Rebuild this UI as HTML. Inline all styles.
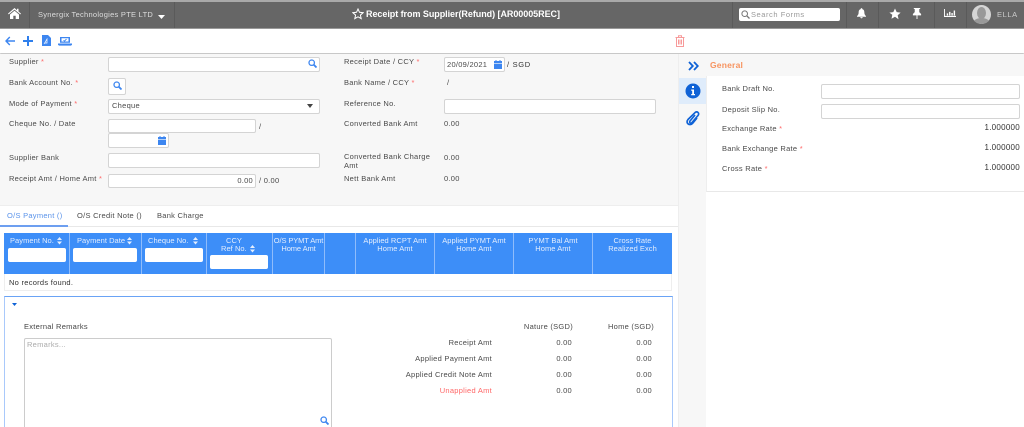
<!DOCTYPE html>
<html><head><meta charset="utf-8">
<style>
html,body{margin:0;padding:0;width:1024px;height:427px;overflow:hidden;background:#fff}
body{position:relative;font-family:"Liberation Sans",sans-serif;font-size:7.5px;letter-spacing:.27px;color:#4a4a4a}
.a,.t,.i,svg{position:absolute}
.t{line-height:10px;white-space:nowrap;margin-top:2px}
.r{text-align:right}
.c{text-align:center}
.i{box-sizing:border-box;background:#fff;border:1px solid #d4d4d4;border-radius:2px}
.s{color:#f66}
.d{width:1px;background:#8fbcfb;top:233px;height:41px}
.h{color:#e4eefe;line-height:8px;text-align:center;white-space:nowrap;top:237px;letter-spacing:.05px}
.f{background:#fff;border-radius:2px;height:14px;box-sizing:border-box}
.v{width:1px;background:#5a5a5a;top:2px;height:26px}
</style></head><body>
<!-- top bar -->
<div class="a" style="left:0;top:0;width:1024px;height:2px;background:#a9a9a9"></div>
<div class="a" style="left:0;top:2px;width:1024px;height:26px;background:#666"></div>
<div class="a" style="left:0;top:28px;width:1024px;height:1px;background:#999"></div>
<div class="a v" style="left:29px"></div><div class="a v" style="left:174px"></div>
<div class="a v" style="left:732px"></div><div class="a v" style="left:846px"></div>
<div class="a v" style="left:878px"></div><div class="a v" style="left:934px"></div>
<div class="a v" style="left:966px"></div>
<svg style="left:8px;top:8px" width="13" height="11" viewBox="0 0 13 11"><path fill="#fff" d="M6.5 0L0 5.6l.7.8L6.5 1.6l5.800 4.800.7-.8L10.500 3.500V.7H9v1.500zM2 6.500V11h3.300V7.700h2.400V11H11V6.500L6.500 2.800z"/></svg>
<div class="t" style="left:38px;top:8px;color:#ddd">Synergix Technologies PTE LTD</div>
<svg style="left:158px;top:15px" width="7" height="4" viewBox="0 0 7 4"><path fill="#fff" d="M0 0h7L3.500 4z"/></svg>
<svg style="left:352px;top:8px" width="12" height="12" viewBox="0 0 12 12"><path fill="none" stroke="#fff" stroke-width="1" d="M6 1l1.500 3.300 3.600.4-2.700 2.400.8 3.500L6 8.800l-3.200 1.800.8-3.500L.9 4.700l3.600-.4z"/></svg>
<div class="t" style="left:366px;top:7px;color:#fff;font-size:9px;letter-spacing:-.05px;font-weight:bold">Receipt from Supplier(Refund) [AR00005REC]</div>
<div class="a" style="left:739px;top:8px;width:101px;height:13px;background:#fff;border-radius:2px"></div>
<svg style="left:741px;top:10px" width="9" height="9" viewBox="0 0 9 9"><circle cx="3.700" cy="3.700" r="2.800" fill="none" stroke="#777" stroke-width="1"/><path stroke="#777" stroke-width="1.300" d="M5.800 5.800L8.500 8.500"/></svg>
<div class="t" style="left:751px;top:8px;color:#999;letter-spacing:.55px">Search Forms</div>
<svg style="left:857px;top:8px" width="9" height="11" viewBox="0 0 11 13"><path fill="#fff" d="M5.500 0a1 1 0 0 1 1 1.200C8.500 1.700 9 3.500 9 5.500c0 2 .8 3 2 4.200v.8H0v-.8c1.200-1.200 2-2.200 2-4.200 0-2 .5-3.800 2.500-4.300A1 1 0 0 1 5.500 0zM4 11h3a1.500 1.500 0 0 1-3 0z"/></svg>
<svg style="left:889px;top:8px" width="12" height="12" viewBox="0 0 12 12"><path fill="#fff" d="M6 .5l1.700 3.600 3.900.5-2.900 2.700.8 3.900L6 8.800l-3.500 1.900.8-3.900L.4 4.600l3.900-.5z"/></svg>
<svg style="left:912px;top:8px" width="10" height="11" viewBox="0 0 11 12"><path fill="#fff" d="M2 0h7v1H8v3.500l2 2V8H6v4H5V8H1V6.500l2-2V1H2z"/></svg>
<svg style="left:944px;top:9px" width="12" height="8" viewBox="0 0 13 11" preserveAspectRatio="none"><path fill="#fff" d="M0 0h1v9.500h12V11H0zM3 6h1.500v3H3zM5.500 4H7v5H5.500zM8 5.500h1.500V9H8zM10.500 2H12v7h-1.500z"/></svg>
<div class="a" style="left:972px;top:5px;width:19px;height:19px;border-radius:50%;background:#d5d5d5;overflow:hidden">
<div class="a" style="left:5px;top:2px;width:9px;height:12px;border-radius:50%;background:#999"></div>
<div class="a" style="left:1px;top:13px;width:17px;height:10px;border-radius:50%;background:#999"></div></div>
<div class="t" style="left:997px;top:8px;color:#ccc;letter-spacing:.6px">ELLA</div>
<!-- toolbar -->
<div class="a" style="left:0;top:29px;width:1024px;height:24px;background:#fff;box-shadow:0 1px 1px #bbb"></div>
<svg style="left:5px;top:36px" width="10" height="10" viewBox="0 0 10 10"><path fill="none" stroke="#3d86f0" stroke-width="1.400" d="M10 5H1M4.800 1L1 5l3.800 4"/></svg>
<svg style="left:23px;top:36px" width="10" height="10" viewBox="0 0 10 10"><path fill="#2f7fec" d="M4 0h2v4h4v2H6v4H4V6H0V4h4z"/></svg>
<svg style="left:42px;top:35px" width="9" height="11" viewBox="0 0 9 11"><path fill="#3d86f0" d="M0 0h6l3 3v8H0z"/><path fill="none" stroke="#fff" stroke-width=".7" d="M2 9l3-5v4H2.500"/></svg>
<svg style="left:58px;top:37px" width="14" height="9" viewBox="0 0 14 11" preserveAspectRatio="none"><path fill="#3d86f0" d="M2 0h10v7H2zM0 8h14v1.500l-1 1H1l-1-1z"/><path fill="#fff" d="M3.500 1.500h7v4h-7z"/><path fill="none" stroke="#3d86f0" d="M5.500 4l1 1 2-2.500"/></svg>
<svg style="left:675px;top:35px" width="10" height="12" viewBox="0 0 10 12"><path fill="none" stroke="#f79a9a" stroke-width="1" d="M.5 2.500h9M3.500 2.500V.7h3v1.800M1.500 2.500v9h7v-9M3.500 4.500v5M5 4.500v5M6.500 4.500v5"/></svg>
<!-- form bg -->
<div class="a" style="left:0;top:54px;width:679px;height:151px;background:#f7f7f7"></div>
<div class="a" style="left:679px;top:54px;width:27px;height:373px;background:#f7f7f7"></div>
<div class="a" style="left:706px;top:54px;width:318px;height:22px;background:#f7f7f7"></div>
<div class="a" style="left:706px;top:76px;width:318px;height:116px;background:#fff;border-left:1px solid #eee;border-bottom:1px solid #e8e8e8;box-sizing:border-box"></div>
<div class="a" style="left:678px;top:54px;width:1px;height:373px;background:#eee"></div>
<div class="a" style="left:679px;top:78px;width:27px;height:26px;background:#dfecfb"></div>
<!-- left form labels -->
<div class="t" style="left:9px;top:55px">Supplier <span class="s">*</span></div>
<div class="t" style="left:9px;top:76px">Bank Account No. <span class="s">*</span></div>
<div class="t" style="left:9px;top:97px">Mode of Payment <span class="s">*</span></div>
<div class="t" style="left:9px;top:117px">Cheque No. / Date</div>
<div class="t" style="left:9px;top:151px">Supplier Bank</div>
<div class="t" style="left:9px;top:172px">Receipt Amt / Home Amt <span class="s">*</span></div>
<div class="i" style="left:108px;top:57px;width:212px;height:15px"></div>
<svg style="left:308px;top:59px" width="9" height="9" viewBox="0 0 9 9"><circle cx="3.700" cy="3.700" r="2.700" fill="none" stroke="#3d86f0" stroke-width="1.300"/><path stroke="#3d86f0" stroke-width="1.800" d="M5.800 5.800L8.500 8.500"/></svg>
<div class="i" style="left:108px;top:78px;width:18px;height:17px"></div>
<svg style="left:113px;top:81px" width="9" height="9" viewBox="0 0 9 9"><circle cx="3.700" cy="3.700" r="2.700" fill="none" stroke="#3d86f0" stroke-width="1.300"/><path stroke="#3d86f0" stroke-width="1.800" d="M5.800 5.800L8.500 8.500"/></svg>
<div class="i" style="left:108px;top:99px;width:212px;height:15px"></div>
<div class="t" style="left:112px;top:99px">Cheque</div>
<svg style="left:307px;top:104px" width="6" height="4" viewBox="0 0 6 4"><path fill="#444" d="M0 0h6L3 4z"/></svg>
<div class="i" style="left:108px;top:119px;width:148px;height:14px"></div>
<div class="t" style="left:259px;top:120px">/</div>
<div class="i" style="left:108px;top:133px;width:61px;height:15px"></div>
<svg style="left:158px;top:136px" width="8" height="9" viewBox="0 0 8 9"><path fill="#3d86f0" d="M0 1h1.500V0h1v1h3V0h1v1H8v2H0zM0 3.600h8V9H0z"/></svg>
<div class="i" style="left:108px;top:153px;width:212px;height:15px"></div>
<div class="i" style="left:108px;top:174px;width:148px;height:14px"></div>
<div class="t r" style="left:200px;top:174px;width:53px">0.00</div>
<div class="t" style="left:259px;top:174px">/ 0.00</div>
<!-- middle -->
<div class="t" style="left:344px;top:55px">Receipt Date / CCY <span class="s">*</span></div>
<div class="t" style="left:344px;top:76px">Bank Name / CCY <span class="s">*</span></div>
<div class="t" style="left:344px;top:97px">Reference No.</div>
<div class="t" style="left:344px;top:117px">Converted Bank Amt</div>
<div class="t" style="left:344px;top:151px;line-height:8.500px;width:90px;white-space:normal">Converted Bank Charge Amt</div>
<div class="t" style="left:344px;top:172px">Nett Bank Amt</div>
<div class="i" style="left:444px;top:57px;width:61px;height:15px"></div>
<div class="t" style="left:447px;top:58px">20/09/2021</div>
<svg style="left:494px;top:60px" width="8" height="9" viewBox="0 0 8 9"><path fill="#3d86f0" d="M0 1h1.500V0h1v1h3V0h1v1H8v2H0zM0 3.600h8V9H0z"/></svg>
<div class="t" style="left:507px;top:58px;color:#333;letter-spacing:.7px">/ SGD</div>
<div class="t" style="left:447px;top:76px">/</div>
<div class="i" style="left:444px;top:99px;width:212px;height:15px"></div>
<div class="t" style="left:444px;top:117px">0.00</div>
<div class="t" style="left:444px;top:151px">0.00</div>
<div class="t" style="left:444px;top:172px">0.00</div>
<!-- side icons -->
<svg style="left:688px;top:61px" width="11" height="10" viewBox="0 0 11 10"><path fill="none" stroke="#0f62d6" stroke-width="1.800" d="M1 1l3.800 4L1 9M6 1l3.800 4L6 9"/></svg>
<svg style="left:685px;top:83px" width="16" height="16" viewBox="0 0 16 16"><circle cx="8" cy="8" r="7.500" fill="#0f62d6"/><path fill="#fff" d="M7 3h2v2H7zM6.200 6.500H9V11h1v1.200H6.200V11h1V7.700h-1z"/></svg>
<svg style="left:685px;top:110px" width="16" height="17" viewBox="0 0 16 17"><path fill="none" stroke="#0f62d6" stroke-width="1.700" d="M10 5l-5 6c-1.200 1.500.8 3 2 1.600l6-7.100c2-2.500-1.200-5-3.200-2.700L3 9.500c-3 3.500 1.800 7 4.600 3.800L12 8"/></svg>
<!-- right panel -->
<div class="t" style="left:710px;top:58px;color:#f7935f;font-weight:bold;font-size:8.500px;letter-spacing:.2px">General</div>
<div class="t" style="left:722px;top:82px">Bank Draft No.</div>
<div class="t" style="left:722px;top:103px">Deposit Slip No.</div>
<div class="t" style="left:722px;top:122px">Exchange Rate <span class="s">*</span></div>
<div class="t" style="left:722px;top:142px">Bank Exchange Rate <span class="s">*</span></div>
<div class="t" style="left:722px;top:162px">Cross Rate <span class="s">*</span></div>
<div class="i" style="left:821px;top:84px;width:199px;height:15px"></div>
<div class="i" style="left:821px;top:104px;width:199px;height:15px"></div>
<div class="t r" style="left:960px;top:121px;width:60px;color:#333;font-size:8px">1.000000</div>
<div class="t r" style="left:960px;top:141px;width:60px;color:#333;font-size:8px">1.000000</div>
<div class="t r" style="left:960px;top:161px;width:60px;color:#333;font-size:8px">1.000000</div>
<!-- tabs -->
<div class="a" style="left:0;top:205px;width:678px;height:1px;background:#eee"></div>
<div class="a" style="left:0;top:226px;width:678px;height:1px;background:#e8e8e8"></div>
<div class="a" style="left:0;top:225px;width:68px;height:2px;background:#6d9ff0"></div>
<div class="t" style="left:7px;top:209px;color:#5a93ea">O/S Payment ()</div>
<div class="t" style="left:77px;top:209px">O/S Credit Note ()</div>
<div class="t" style="left:157px;top:209px">Bank Charge</div>
<!-- table -->
<div class="a" style="left:4px;top:233px;width:668px;height:41px;background:#3d8ef8"></div>
<div class="a d" style="left:69px"></div><div class="a d" style="left:141px"></div>
<div class="a d" style="left:206px"></div><div class="a d" style="left:272px"></div>
<div class="a d" style="left:324px"></div><div class="a d" style="left:355px"></div>
<div class="a d" style="left:434px"></div><div class="a d" style="left:513px"></div>
<div class="a d" style="left:592px"></div>
<div class="a h" style="left:10px">Payment No.</div>
<svg style="left:57px;top:237px" width="5" height="8" viewBox="0 0 5 8"><path fill="#e4eefe" d="M2.500 0L5 3H0zM0 4.500h5L2.500 7.500z"/></svg>
<div class="a h" style="left:77px">Payment Date</div>
<svg style="left:127px;top:237px" width="5" height="8" viewBox="0 0 5 8"><path fill="#e4eefe" d="M2.500 0L5 3H0zM0 4.500h5L2.500 7.500z"/></svg>
<div class="a h" style="left:148px">Cheque No.</div>
<svg style="left:193px;top:237px" width="5" height="8" viewBox="0 0 5 8"><path fill="#e4eefe" d="M2.500 0L5 3H0zM0 4.500h5L2.500 7.500z"/></svg>
<div class="a h" style="left:207px;width:54px">CCY</div>
<div class="a h" style="left:221px;top:245px">Ref No.</div>
<svg style="left:250px;top:245px" width="5" height="8" viewBox="0 0 5 8"><path fill="#e4eefe" d="M2.500 0L5 3H0zM0 4.500h5L2.500 7.500z"/></svg>
<div class="a h" style="left:273px;width:51px;letter-spacing:-.1px">O/S PYMT Amt<br>Home Amt</div>
<div class="a h" style="left:356px;width:78px">Applied RCPT Amt<br>Home Amt</div>
<div class="a h" style="left:435px;width:78px">Applied PYMT Amt<br>Home Amt</div>
<div class="a h" style="left:514px;width:78px">PYMT Bal Amt<br>Home Amt</div>
<div class="a h" style="left:593px;width:79px">Cross Rate<br>Realized Exch</div>
<div class="a f" style="left:8px;top:248px;width:58px"></div>
<div class="a f" style="left:73px;top:248px;width:64px"></div>
<div class="a f" style="left:145px;top:248px;width:58px"></div>
<div class="a f" style="left:210px;top:255px;width:58px"></div>
<div class="a" style="left:4px;top:274px;width:668px;height:17px;box-sizing:border-box;border:1px solid #eee;border-top:0"></div>
<div class="t" style="left:9px;top:276px;color:#333">No records found.</div>
<!-- panel -->
<div class="a" style="left:4px;top:296px;width:669px;height:140px;box-sizing:border-box;border:1px solid #a9c9fb;border-top-color:#6aa3f5;border-left-width:1.500px;border-right-width:1.500px"></div>
<svg style="left:12px;top:303px" width="5" height="4" viewBox="0 0 5 4"><path fill="#0f62d6" d="M0 0h5L2.500 3z"/></svg>
<div class="t" style="left:24px;top:320px;color:#444">External Remarks</div>
<div class="a" style="left:24px;top:338px;width:308px;height:100px;box-sizing:border-box;border:1px solid #ccc;border-radius:2px;background:#fff"></div>
<div class="t" style="left:27px;top:338px;color:#aaa">Remarks...</div>
<svg style="left:320px;top:416px" width="9" height="9" viewBox="0 0 9 9"><circle cx="3.700" cy="3.700" r="2.700" fill="none" stroke="#3d86f0" stroke-width="1.300"/><path stroke="#3d86f0" stroke-width="1.800" d="M5.800 5.800L8.500 8.500"/></svg>
<div class="t r" style="left:493px;top:320px;width:80px">Nature (SGD)</div>
<div class="t r" style="left:574px;top:320px;width:80px">Home (SGD)</div>
<div class="t r" style="left:372px;top:336px;width:120px">Receipt Amt</div>
<div class="t r" style="left:372px;top:352px;width:120px">Applied Payment Amt</div>
<div class="t r" style="left:372px;top:368px;width:120px">Applied Credit Note Amt</div>
<div class="t r" style="left:372px;top:384px;width:120px;color:#f66">Unapplied Amt</div>
<div class="t r" style="left:522px;top:336px;width:50px">0.00</div>
<div class="t r" style="left:522px;top:352px;width:50px">0.00</div>
<div class="t r" style="left:522px;top:368px;width:50px">0.00</div>
<div class="t r" style="left:522px;top:384px;width:50px">0.00</div>
<div class="t r" style="left:602px;top:336px;width:50px">0.00</div>
<div class="t r" style="left:602px;top:352px;width:50px">0.00</div>
<div class="t r" style="left:602px;top:368px;width:50px">0.00</div>
<div class="t r" style="left:602px;top:384px;width:50px">0.00</div>
</body></html>
